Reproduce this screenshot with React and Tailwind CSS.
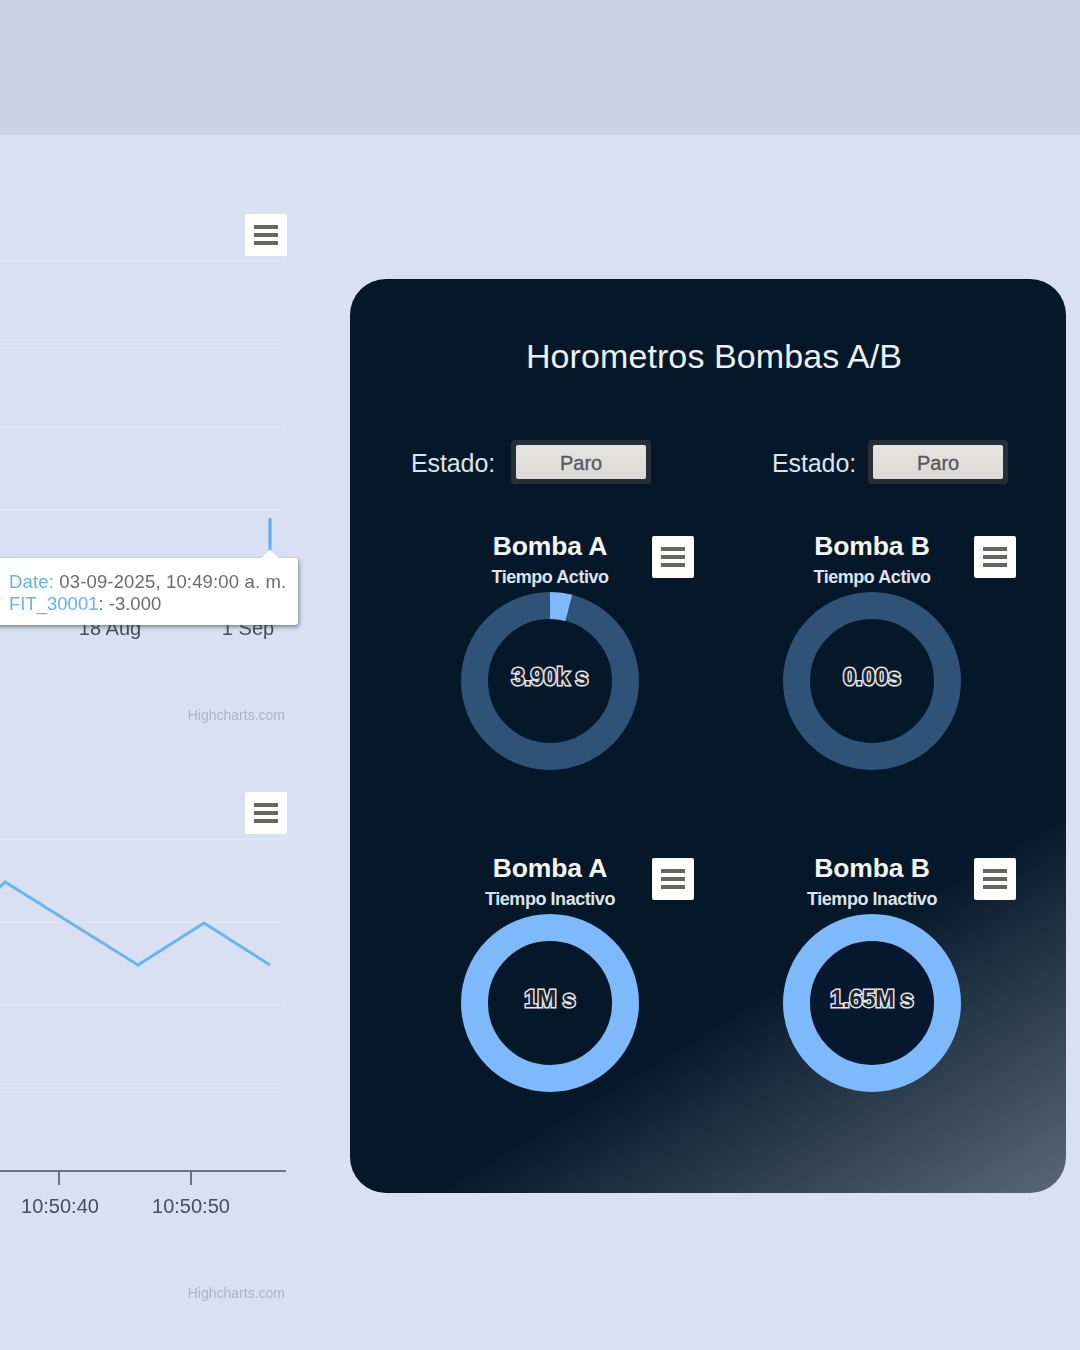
const SANS = 'font-["Liberation_Sans",Arial,sans-serif]';

function MenuButton({ className }) {
  return (
    <div className={`absolute flex h-[42px] w-[42px] flex-col items-center justify-center gap-[4px] rounded-[2px] bg-white ${className}`}>
      <span className="h-[4px] w-[24px] bg-[#66665f]" />
      <span className="h-[4px] w-[24px] bg-[#66665f]" />
      <span className="h-[4px] w-[24px] bg-[#66665f]" />
    </div>
  );
}

function Chart({ children, credit }) {
  return (
    <div className="relative h-[578px] w-[287px]">
      <MenuButton className="right-0 top-0" />
      <svg width="287" height="578" className="block overflow-visible">
        {[47, 130, 213, 296].map((y) => (
          <line key={y} x1="0" x2="286" y1={y} y2={y} stroke="#dfe5f4" strokeWidth="2" />
        ))}
        {children}
        <text x="285" y={credit} textAnchor="end" fontSize="14" fill="#adb4c7" fontFamily="Liberation Sans">Highcharts.com</text>
      </svg>
    </div>
  );
}

function Donut({ title, subtitle, value, fill, active, inner }) {
  const r = 75.5;
  const c = 2 * Math.PI * r;
  const dash = fill === 1 ? c : c * (14.5 / 360);
  return (
    <div className="relative flex h-[322px] w-[322px] flex-col items-center pt-[11px]">
      <MenuButton className="right-[17px] top-[16px]" />
      <div className="h-[30px] text-[26.5px] font-bold leading-[30px] tracking-[-0.1px] text-[#f4f6f8]">{title}</div>
      <div className="mt-[4px] h-[24px] text-[18px] font-bold leading-[24px] tracking-[-0.45px] text-[#dde3ea]">{subtitle}</div>
      <div className="relative mt-[2px] h-[180px] w-[180px]">
        <svg width="180" height="180" className="block -rotate-90">
          <circle cx="90" cy="90" r={r} fill={inner} stroke={fill === 1 ? active : "#2f5277"} strokeWidth="27" />
          {fill !== 1 && fill > 0 && (
            <circle cx="90" cy="90" r={r} fill="none" stroke={active} strokeWidth="27" strokeDasharray={`${dash} ${c}`} />
          )}
        </svg>
        <div className="absolute inset-0 flex items-center justify-center pb-[8px] text-[23px] font-bold text-[#1a2430] [-webkit-text-stroke:3px_#e4e7ea] [paint-order:stroke_fill]">
          {value}
        </div>
      </div>
    </div>
  );
}

function Estado({ className }) {
  return (
    <div className={`flex h-[44px] items-center ${className}`}>
      <span className="pt-[3px] text-[25px] tracking-[-0.1px] text-[#dce4ec]">Estado:</span>
      <div className="rounded-[4px] bg-[#262f38] p-[5px]">
        <div className="flex h-[34px] w-[130px] items-center justify-center rounded-[2px] bg-[linear-gradient(180deg,#e6e4e1,#dcdad7)] pt-[1px] text-[20px] text-[#55585c] [-webkit-text-stroke:0.3px_#55585c]">Paro</div>
      </div>
    </div>
  );
}

export default function App() {
  const A = "#7db9fb";
  return (
    <div className="h-[1350px] w-[1080px] overflow-hidden bg-[#d9e0f1]">
      <div className={`h-[1350px] w-[1080px] bg-[#d9e0f1] blur-[0.6px] ${SANS}`}>
        <div className="h-[135px] bg-[#cad2e3]" />
        <div className="flex">
          <div className="flex w-[350px] flex-col pt-[79px]">
            <div className="relative">
              <Chart credit={506}>
                <line x1="270" x2="270" y1="304" y2="340" stroke="#63aee8" strokeWidth="3" />
                <text x="110" y="421" textAnchor="middle" fontSize="20" fill="#454d5e">18 Aug</text>
                <text x="248" y="421" textAnchor="middle" fontSize="20" fill="#454d5e">1 Sep</text>
              </Chart>
              <div className="absolute left-[-12px] top-[344px] h-[67px] w-[310px] rounded-[3px] bg-white pl-[21px] pt-[13px] text-[18.5px] leading-[22px] text-[#6b6b6b] shadow-[1px_2px_4px_rgba(40,50,70,0.55)]">
                <div className="absolute right-[22px] top-[-6px] h-[12px] w-[12px] rotate-45 bg-white" />
                <div className="relative whitespace-nowrap tracking-[0.15px]"><span className="text-[#61b4ea]">Date:</span> 03-09-2025, 10:49:00 a. m.</div>
                <div className="relative whitespace-nowrap"><span className="text-[#61b4ea]">FIT_30001</span>: -3.000</div>
              </div>
              <Chart credit={506}>
                <polyline points="-2,97 5,90 138,173 204,131 270,173" fill="none" stroke="#6bb6ec" strokeWidth="3" />
                <line x1="0" x2="286" y1="379" y2="379" stroke="#4a5263" strokeWidth="1.5" />
                <line x1="59" x2="59" y1="379" y2="393" stroke="#6a7181" strokeWidth="2" />
                <line x1="191" x2="191" y1="379" y2="393" stroke="#6a7181" strokeWidth="2" />
                <text x="60" y="421" textAnchor="middle" fontSize="20" fill="#454d5e">10:50:40</text>
                <text x="191" y="421" textAnchor="middle" fontSize="20" fill="#454d5e">10:50:50</text>
              </Chart>
            </div>
          </div>
          <div className="mt-[144px] h-[914px] w-[716px] rounded-[36px] bg-[linear-gradient(149deg,#04182a_71%,#5b6776_100%)] pl-[39px] pt-[55px]">
            <div className="h-[44px] pr-[27px] text-center text-[34px] leading-[44px] tracking-[0.1px] text-[#edf1f5]">Horometros Bombas A/B</div>
            <div className="ml-[22px] mt-[62px] flex">
              <Estado className="w-[361px] gap-[16px]" />
              <Estado className="gap-[12px]" />
            </div>
            <div className="mt-[36px] grid w-[644px] grid-cols-2">
              <Donut title="Bomba A" subtitle="Tiempo Activo" value="3.90k s" fill={0.04} active={A} inner="transparent" />
              <Donut title="Bomba B" subtitle="Tiempo Activo" value="0.00s" fill={0} active={A} inner="transparent" />
              <Donut title="Bomba A" subtitle="Tiempo Inactivo" value="1M s" fill={1} active={A} inner="transparent" />
              <Donut title="Bomba B" subtitle="Tiempo Inactivo" value="1.65M s" fill={1} active={A} inner="#06182e" />
            </div>
          </div>
        </div>
      </div>
    </div>
  );
}
